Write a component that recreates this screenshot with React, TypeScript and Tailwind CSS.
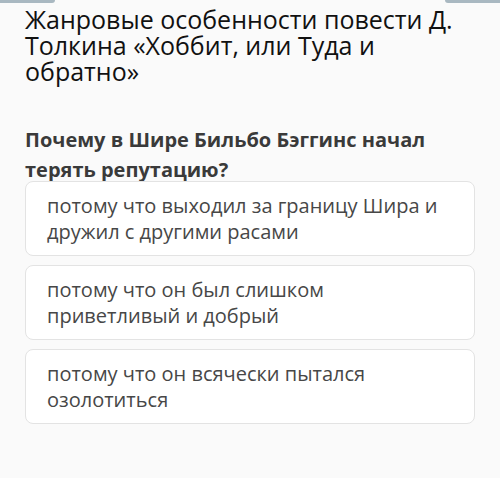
export default function App() {
  const answers = [
    "потому что выходил за границу Шира и дружил с другими расами",
    "потому что он был слишком приветливый и добрый",
    "потому что он всячески пытался озолотиться",
  ];

  return (
    <div className="relative h-[478px] w-[500px] overflow-hidden bg-[#fafafa] font-['Open_Sans',sans-serif]">
      <div className="absolute left-0 top-0 h-[3px] w-[55px] rounded-br-md bg-[#a9b8c1]" />
      <div className="absolute right-0 top-0 h-[3px] w-[55px] rounded-bl-md bg-[#a9b8c1]" />

      <div className="px-[25px] pt-[6px]">
        <h1 className="text-[25px] leading-[26px] text-[#111]">
          Жанровые особенности повести Д. Толкина «Хоббит, или Туда и обратно»
        </h1>
        <h2 className="mt-[41px] text-[20px] font-bold leading-[30px] text-[#3a3a3a]">
          Почему в Шире Бильбо Бэггинс начал терять репутацию?
        </h2>
      </div>

      <div className="-mt-[4px] flex flex-col gap-[9px] px-[25px]">
        {answers.map((a) => (
          <div key={a} className="flex h-[75px] items-center rounded-lg border border-[#e3e3e3] bg-white pl-[21px] pr-[30px]">
            <p className="text-[20px] leading-[26px] text-[#474747]">{a}</p>
          </div>
        ))}
      </div>
    </div>
  );
}
